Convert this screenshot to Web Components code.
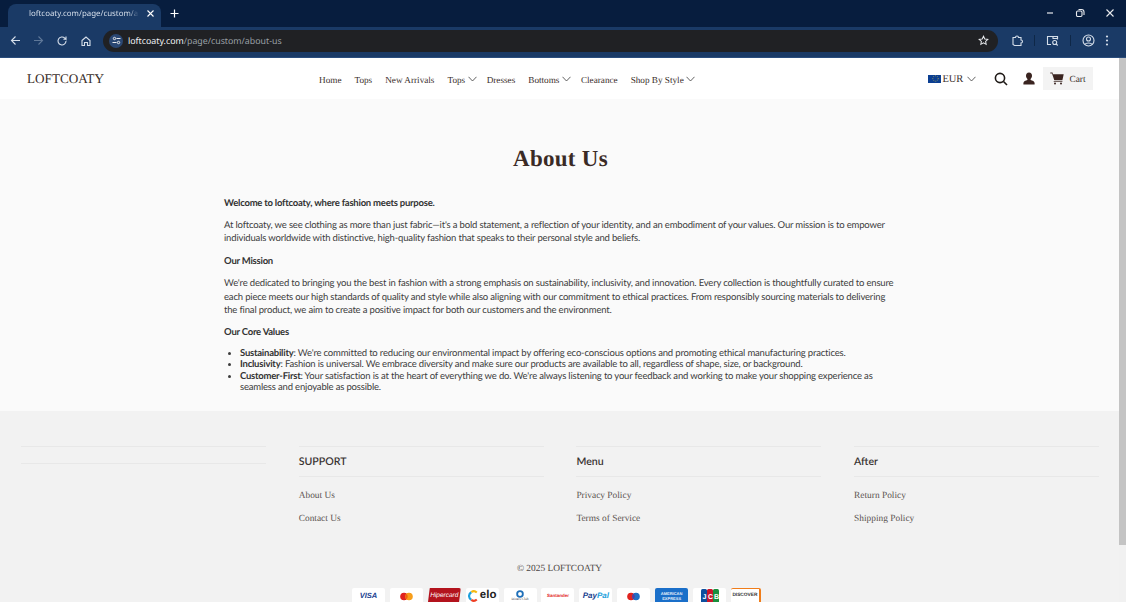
<!DOCTYPE html>
<html><head><meta charset="utf-8"><style>
html,body{margin:0;height:602px;overflow:hidden;background:#fff;text-rendering:geometricPrecision}
body{display:flex;flex-direction:column;width:1126px}
#viewport{display:flex;flex:1;min-height:0}
#page{flex:1;min-width:0;display:flex;flex-direction:column;overflow:hidden}
</style></head><body>
<browser-chrome></browser-chrome>
<div id="viewport">
<div id="page">
<site-header></site-header>
<about-content></about-content>
<site-footer></site-footer>
</div>
<fake-scrollbar></fake-scrollbar>
</div>
<script>
const def=(name,html)=>customElements.define(name,class extends HTMLElement{constructor(){super();this.attachShadow({mode:'open'}).innerHTML=html}});
const chev=`<svg width="9" height="6" viewBox="0 0 9 6" fill="none" stroke="#3a3a3a" stroke-width=".8"><path d="M.5.8 4.500 5 8.500.8"/></svg>`;
def('browser-chrome',`<style>
:host{display:block;font-family:"Noto Sans","Open Sans",sans-serif;color:#fff;flex:none}
.strip{height:27px;background:#071d3e;display:flex;align-items:flex-end;position:relative}
.tab{margin-left:8px;width:153px;height:23px;background:#1a3a66;border-radius:8px 8px 0 0;display:flex;align-items:center;box-sizing:border-box;padding:0 0 4px 21px;font-size:7.900px;color:#d5deea}
.tab span{width:110px;white-space:nowrap;-webkit-mask-image:linear-gradient(90deg,#000 90%,transparent 100%);mask-image:linear-gradient(90deg,#000 90%,transparent 100%)}
.tab svg{margin-left:7px}
.plus{margin:0 0 4px 9px;height:20px;display:flex;align-items:center}
.win{margin-left:auto;display:flex;gap:20px;align-items:center;padding:0 11px 4px 0;height:20px}
.bar{height:31px;background:#1a3a66;display:flex;align-items:center;padding:0 11px 3px 10px;box-sizing:border-box;border-bottom:1px solid #2a4d7d}
.nav{display:flex;gap:12px;align-items:center}
.url{margin-left:11px;width:895px;flex:none;height:22px;background:#202124;border-radius:11px;display:flex;align-items:center;box-sizing:border-box;padding:0 9px 0 6px;font-size:8.800px;white-space:nowrap}
.pill{width:14px;height:14px;border-radius:50%;background:#2a4772;display:flex;align-items:center;justify-content:center;margin-right:5px}
.url b{font-weight:400;color:#f1f3f4}.url i{font-style:normal;color:#9aa0a6}
.url svg.st{margin-left:auto}
.tools{display:flex;align-items:center;margin-left:13px}
.sep{width:1px;height:11px;background:#0e2747}
</style>
<div class="strip"><div class="tab"><span>loftcoaty.com/page/custom/ab</span><svg width="9" height="9" viewBox="0 0 9 9" stroke="#fff" stroke-width="1.100"><path d="M1.500 1.500l6 6M7.500 1.500l-6 6"/></svg></div>
<div class="plus"><svg width="9" height="9" viewBox="0 0 9 9" stroke="#fff" stroke-width="1.200"><path d="M4.500.5v8M.5 4.500h8"/></svg></div>
<div class="win"><svg width="10" height="10" viewBox="0 0 10 10" stroke="#e8eaed" stroke-width="1.200"><path d="M2 5h6"/></svg>
<svg width="10" height="10" viewBox="0 0 10 10" fill="none" stroke="#e8eaed" stroke-width="1.100"><rect x="1.500" y="3" width="5.500" height="5.500" rx="1.200"/><path d="M3.500 1.500h3a2.500 2.500 0 0 1 2.500 2.500v3"/></svg>
<svg width="10" height="10" viewBox="0 0 10 10" stroke="#e8eaed" stroke-width="1.100"><path d="M1.500 1.500l7 7M8.500 1.500l-7 7"/></svg></div></div>
<div class="bar"><div class="nav">
<svg width="11" height="11" viewBox="0 0 11 11" fill="none" stroke="#d5deea" stroke-width="1.100"><path d="M10 5.500H1.500M5.500 1.500l-4 4 4 4"/></svg>
<svg width="11" height="11" viewBox="0 0 11 11" fill="none" stroke="#5f7899" stroke-width="1.100"><path d="M1 5.500h8.500M5.500 1.500l4 4-4 4"/></svg>
<svg width="12" height="12" viewBox="0 0 12 12" fill="none" stroke="#d5deea" stroke-width="1.100"><path d="M10 6a4 4 0 1 1-1.200-2.900L10 4.300V1.600M10 4.300H7.400"/></svg>
<svg width="12" height="12" viewBox="0 0 12 12" fill="none" stroke="#d5deea" stroke-width="1.100"><path d="M2 5.500 6 2l4 3.500V10.500H7.500V7.500h-3v3H2z"/></svg>
</div><div class="url"><div class="pill"><svg width="9" height="9" viewBox="0 0 9 9" fill="none" stroke="#e8eaed" stroke-width="1"><circle cx="2.500" cy="2.500" r="1.200"/><path d="M4.500 2.500h4M.5 6.500h4"/><circle cx="6.500" cy="6.500" r="1.200"/></svg></div><b>loftcoaty.com</b><i>/page/custom/about-us</i>
<svg class="st" width="11" height="11" viewBox="0 0 12 12" fill="none" stroke="#e8eaed" stroke-width="1.100"><path d="M6 1.300l1.400 3 3.300.4-2.400 2.200.6 3.300L6 8.600l-2.900 1.600.6-3.300L1.300 4.700l3.300-.4z"/></svg></div>
<div class="tools">
<svg width="13" height="13" viewBox="0 0 13 13" fill="none" stroke="#d5deea" stroke-width="1.100"><path d="M2 3.500h2.500a1.500 1.500 0 0 1 3 0H10v2.500a1.500 1.500 0 0 1 0 3V11.500H3.500L2 10.500z"/></svg>
<div class="sep" style="margin:0 11px 0 10px"></div>
<svg width="13" height="13" viewBox="0 0 13 13" fill="none" stroke="#d5deea" stroke-width="1.100"><path d="M5 10.500H1.500v-8h10v3"/><circle cx="8.700" cy="8.500" r="2"/><path d="M10.200 10l1.500 1.500M7 2.500h4.500v2H7z"/></svg>
<div class="sep" style="margin:0 11px 0 11px"></div>
<svg width="13" height="13" viewBox="0 0 13 13" fill="none" stroke="#d5deea" stroke-width="1.100"><circle cx="6.500" cy="6.500" r="5.500"/><circle cx="6.500" cy="5" r="2"/><path d="M3 10.300c1-1.800 6-1.800 7 0"/></svg>
<svg style="margin-left:9px" width="6" height="13" viewBox="0 0 6 13" fill="#d5deea"><circle cx="3" cy="2.500" r="1.100"/><circle cx="3" cy="6.500" r="1.100"/><circle cx="3" cy="10.500" r="1.100"/></svg>
</div></div>`);
def('site-header',`<style>
:host{display:flex;flex:none;height:41px;background:#fff;align-items:center;box-sizing:border-box;padding:0 26px 0 27px;font-family:"Liberation Serif",serif;color:#3a2e2a;position:relative}
.logo{font-size:13.200px;width:292px;flex:none}
nav{display:flex;align-items:center;font-size:9.200px;gap:13px;padding-top:2px}
nav span{display:flex;align-items:center;gap:2.500px;white-space:nowrap}
nav span.d{margin-right:-3px}
nav svg{margin-top:-2px}
.r{margin-left:auto;display:flex;align-items:center}
.cur{display:flex;align-items:center;font-size:10.500px}
.cur span{padding-top:2px}
.cur svg:last-child{margin-left:1px}
.flag{width:13px;height:8px;background:#0b3f92;margin-right:1px;display:flex;align-items:center;justify-content:center}
.cart{width:50px;height:23px;background:#f3f3f3;display:flex;align-items:center;justify-content:center;gap:5px;font-size:9.400px;margin-left:8px}
.cart span{padding-top:2px}
</style>
<div class="logo">LOFTCOATY</div>
<nav><span>Home</span><span>Tops</span><span>New Arrivals</span><span class="d">Tops ${chev}</span><span>Dresses</span><span class="d">Bottoms ${chev}</span><span>Clearance</span><span class="d">Shop By Style ${chev}</span></nav>
<div class="r"><div class="cur"><div class="flag"><svg width="7" height="7" viewBox="0 0 7 7" fill="none" stroke="#d9c84a" stroke-width=".8" stroke-dasharray=".8 1.200"><circle cx="3.500" cy="3.500" r="2.700"/></svg></div><span>EUR&nbsp;</span>${chev}</div>
<svg style="margin-left:18px" width="14" height="14" viewBox="0 0 14 14" fill="none" stroke="#1f1a17" stroke-width="1.600"><circle cx="6" cy="6" r="4.600"/><path d="M9.500 9.500 13 13"/></svg>
<svg style="margin-left:15px" width="12" height="13" viewBox="0 0 12 13" fill="#3a2420"><path d="M6 .5c2 0 3 1.500 3 3.300 0 1.400-.6 2.500-1.400 3.200v1c1.800.5 4 1.300 4 3V12.500H.4v-1.500c0-1.700 2.200-2.500 4-3V7C3.600 6.300 3 5.200 3 3.800 3 2 4 .5 6 .5z"/></svg>
<div class="cart"><svg width="14" height="13" viewBox="0 0 14 13" fill="#3a2420"><path d="M.3.600h2.200l.5 1.700h10.700l-1.300 6H4.300L2 1.600H.3z"/><path d="M3.700 9.200h8.700v.7H3.700z"/><circle cx="5" cy="11.500" r="1"/><circle cx="11" cy="11.500" r="1"/></svg><span>Cart</span></div></div>`);
def('about-content',`<style>
:host{display:block;flex:none;height:312px;box-sizing:border-box;background:#fafafa;padding:0 219px 0 224px;font-family:Lato,sans-serif;font-size:9.500px;line-height:13.100px;color:#3c3c3c;letter-spacing:-.175px}
h1{font:700 23px/1 "Liberation Serif",serif;color:#3a2a25;text-align:center;margin:0;padding:48px 3px 27px 0;letter-spacing:.3px}
p{margin:0 0 9.700px}
p.w{margin-bottom:8.700px}
b{font-weight:700;color:#333;letter-spacing:-.23px}
ul{margin:-1px 0 0;padding:0 0 0 16px;line-height:11.300px}
</style>
<h1>About Us</h1>
<p class="w"><b>Welcome to loftcoaty, where fashion meets purpose.</b></p>
<p>At loftcoaty, we see clothing as more than just fabric—it's a bold statement, a reflection of your identity, and an embodiment of your values. Our mission is to empower individuals worldwide with distinctive, high-quality fashion that speaks to their personal style and beliefs.</p>
<p><b>Our Mission</b></p>
<p>We're dedicated to bringing you the best in fashion with a strong emphasis on sustainability, inclusivity, and innovation. Every collection is thoughtfully curated to ensure each piece meets our high standards of quality and style while also aligning with our commitment to ethical practices. From responsibly sourcing materials to delivering the final product, we aim to create a positive impact for both our customers and the environment.</p>
<p><b>Our Core Values</b></p>
<ul><li><b>Sustainability</b>: We're committed to reducing our environmental impact by offering eco-conscious options and promoting ethical manufacturing practices.</li>
<li><b>Inclusivity</b>: Fashion is universal. We embrace diversity and make sure our products are available to all, regardless of shape, size, or background.</li>
<li><b>Customer-First</b>: Your satisfaction is at the heart of everything we do. We're always listening to your feedback and working to make your shopping experience as seamless and enjoyable as possible.</li></ul>`);
def('footer-col',`<style>
:host{display:block;border-top:1px solid #e8e8e8}
.t{font:600 10.600px/1 Lato,sans-serif;color:#3a3432;height:30px;display:flex;align-items:center;border-bottom:1px solid #e8e8e8;box-sizing:border-box;padding-top:2px;margin-bottom:12.500px}
::slotted(a){display:block;font:9.400px/13px "Liberation Serif",serif;color:#5b5350;margin-bottom:10.300px}
</style><div class="t"><slot name="title"></slot></div><slot></slot>`);
def('payment-badge',`<style>:host{display:flex;width:33px;height:16px;background:#fff;border-radius:2px;overflow:hidden;align-items:center;justify-content:center;flex:none}</style><slot></slot>`);
def('site-footer',`<style>
:host{display:block;flex:1;background:#f2f2f2;box-sizing:border-box;padding:35px 0 0 21px;font-family:"Liberation Serif",serif;overflow:hidden}
.cols{display:grid;grid-template-columns:repeat(4,245px);column-gap:32.700px;height:116px}
.first{border-top:1px solid #e8e8e8}.first div{height:16px;border-bottom:1px solid #e8e8e8}
.copy{text-align:center;font-size:9.400px;color:#4a4442;line-height:13px;margin:1px 21px 0 0}
.pay{display:flex;gap:4.900px;margin-top:12px;padding-left:331px}
.s{font:italic 700 7.500px/1 "Liberation Sans",sans-serif;white-space:nowrap}
a{text-decoration:none}
.jcb{font:700 7px/14px "Liberation Sans",sans-serif;fill:#fff}
</style>
<div class="cols"><div class="first"><div></div></div>
<footer-col><span slot="title">SUPPORT</span><a>About Us</a><a>Contact Us</a></footer-col>
<footer-col><span slot="title">Menu</span><a>Privacy Policy</a><a>Terms of Service</a></footer-col>
<footer-col><span slot="title">After</span><a>Return Policy</a><a>Shipping Policy</a></footer-col></div>
<div class="copy">© 2025 LOFTCOATY</div>
<div class="pay">
<payment-badge><span class="s" style="color:#1a3f8f">VISA</span></payment-badge>
<payment-badge><svg width="15" height="9" viewBox="0 0 15 9"><circle cx="5" cy="4.500" r="3.800" fill="#e0231f"/><circle cx="10" cy="4.500" r="3.800" fill="#f79e1b"/><path d="M7.500 1.700a3.800 3.800 0 0 1 0 5.600 3.800 3.800 0 0 1 0-5.600z" fill="#f0600f"/></svg></payment-badge>
<payment-badge style="background:#b3131d;clip-path:polygon(6% 0,100% 0,94% 100%,0 100%)"><span class="s" style="color:#fff;font-weight:400;font-size:6.500px">Hipercard</span></payment-badge>
<payment-badge><svg width="11" height="12" viewBox="0 0 10 11" fill="none" stroke-width="2"><path d="M8 2.300A4 4 0 0 0 3 2" stroke="#f6b80f"/><path d="M3 2A4 4 0 0 0 3 9" stroke="#1ca0dc"/><path d="M3 9A4 4 0 0 0 8 8.700" stroke="#ef3e23"/></svg><span style="font:700 11.500px/1 'Liberation Sans',sans-serif;color:#222;margin-left:1px">elo</span></payment-badge>
<payment-badge style="flex-direction:column"><svg width="8" height="8" viewBox="0 0 7 7"><circle cx="3.500" cy="3.500" r="3.300" fill="#1e6fb8"/><circle cx="3.500" cy="3.500" r="1.700" fill="#fff"/></svg><span style="font:3.500px/1 'Liberation Serif',serif;color:#333;white-space:nowrap">Diners Club</span></payment-badge>
<payment-badge><span class="s" style="color:#e21c23;font-size:4.500px;font-style:normal">Santander</span></payment-badge>
<payment-badge><span class="s" style="color:#1a3f8f;font-size:8px">Pay</span><span class="s" style="color:#1aa0dc;font-size:8px">Pal</span></payment-badge>
<payment-badge><svg width="15" height="9" viewBox="0 0 15 9"><circle cx="5" cy="4.500" r="3.800" fill="#e0231f"/><circle cx="10" cy="4.500" r="3.800" fill="#1f6fc4"/><path d="M7.500 1.700a3.800 3.800 0 0 1 0 5.600 3.800 3.800 0 0 1 0-5.600z" fill="#5a3a9a"/></svg></payment-badge>
<payment-badge style="background:#1a6fc9"><span class="s" style="color:#e8f0fa;font-size:4px;font-style:normal;text-align:center;white-space:normal;line-height:5px">AMERICAN EXPRESS</span></payment-badge>
<payment-badge><svg width="18" height="14" viewBox="0 0 18 14"><rect width="6" height="14" rx="1.500" fill="#0d4f9e"/><rect x="6" width="6" height="14" rx="1.500" fill="#c9162b"/><rect x="12" width="6" height="14" rx="1.500" fill="#1a8f3c"/><text class="jcb" x="1.500" y="10">J</text><text class="jcb" x="7" y="10">C</text><text class="jcb" x="13" y="10">B</text></svg></payment-badge>
<payment-badge style="width:30px;border-top:1px solid #f07d1a;border-right:2px solid #f07d1a;box-sizing:border-box"><span class="s" style="color:#333;font-size:4.800px;font-style:normal">DISCOVER</span></payment-badge>
</div>`);
def('fake-scrollbar',`<style>:host{display:block;width:7px;flex:none;background:#f1f1f1}div{height:487px;background:#c4c4c4}</style><div></div>`);
</script>
</body></html>
